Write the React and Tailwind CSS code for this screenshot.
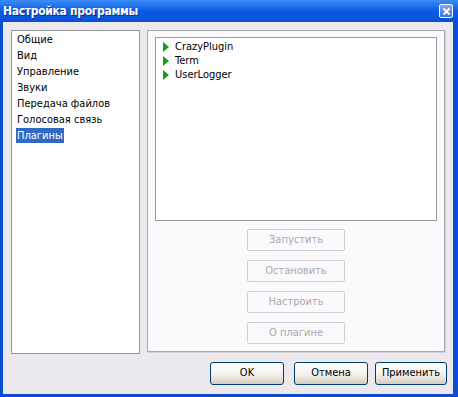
import React from "react";

const SECTIONS = ["Общие", "Вид", "Управление", "Звуки", "Передача файлов", "Голосовая связь", "Плагины"];
const PLUGINS = ["CrazyPlugin", "Term", "UserLogger"];
const PLUGIN_ACTIONS = ["Запустить", "Остановить", "Настроить", "О плагине"];

const font = { fontFamily: '"DejaVu Sans Condensed", "DejaVu Sans", Tahoma, sans-serif' };

function XpButton({ children, className }) {
  return (
    <button
      className={`${className} h-[23px] rounded-[3px] border border-[#003c74] bg-gradient-to-b from-[#ffffff] via-[#f3f3ef] to-[#d6d0c5] text-[11px] text-black shadow-[inset_0_-2px_0_#d8d2bd]`}
    >
      {children}
    </button>
  );
}

export default function App() {
  return (
    <div className="w-[458px] h-[397px] flex flex-col bg-[#0a4ed6]" style={font}>
      {/* Title bar */}
      <div className="h-[22px] flex items-center justify-between pl-[3px] pr-[5px] bg-gradient-to-b from-[#3b8cf7] via-[#0a5ce4] to-[#0850d6]">
        <span className="text-white text-[12px] font-bold tracking-tight [text-shadow:1px_1px_0_#0a2f8f]">Настройка программы</span>
        <div className="w-[14px] h-[14px] rounded-[2px] border border-white bg-gradient-to-b from-[#7fa9f4] to-[#3a72e0] flex items-center justify-center">
          <svg width="9" height="9" viewBox="0 0 9 9">
            <path d="M1.5 1.5 L7.5 7.5 M7.5 1.5 L1.5 7.5" stroke="white" strokeWidth="2" />
          </svg>
        </div>
      </div>

      {/* Body */}
      <div className="flex-1 ml-[3px] mr-[5px] mb-[3px] bg-[#ebe9ed] flex flex-col pt-[8px] pl-[8px] pr-[6px]">
        <div className="flex gap-[7px] items-start">
          {/* Section list */}
          <div className="w-[129px] h-[324px] bg-white border border-[#9a9a9a] pl-[4px] flex flex-col">
            {SECTIONS.map((s) => (
              <div key={s} className="h-[16px] flex items-center text-[11px] text-black">
                <span className={`px-[1px] h-[15px] leading-[15px] ${s === "Плагины" ? "bg-[#316ac5] text-white" : ""}`}>{s}</span>
              </div>
            ))}
          </div>

          {/* Plugins panel */}
          <div className="w-[298px] h-[322px] bg-[#fafafc] border border-[#a8a8b0] shadow-[1px_1px_0_#d4d2d8] flex flex-col items-center pt-[6px]">
            <div className="w-[282px] h-[184px] bg-white border border-[#9a9a9a] pt-[2px] pl-[7px]">
              {PLUGINS.map((p) => (
                <div key={p} className="h-[14px] flex items-center gap-[6px] text-[11px] text-black">
                  <svg width="6" height="10" viewBox="0 0 6 10">
                    <path d="M0 0 L6 5 L0 10 Z" fill="#1a9a1a" />
                  </svg>
                  <span>{p}</span>
                </div>
              ))}
            </div>
            <div className="flex flex-col gap-[9px] mt-[8px]">
              {PLUGIN_ACTIONS.map((a) => (
                <button
                  key={a}
                  disabled
                  className="w-[98px] h-[22px] rounded-[2px] border border-[#cfcfd4] bg-[#fafafc] text-[11px] text-[#a9a9ad]"
                >
                  {a}
                </button>
              ))}
            </div>
          </div>
        </div>

        {/* Dialog buttons */}
        <div className="flex justify-end mt-[8px]">
          <XpButton className="w-[74px]">OK</XpButton>
          <XpButton className="w-[74px] ml-[10px]">Отмена</XpButton>
          <XpButton className="w-[72px] ml-[7px]">Применить</XpButton>
        </div>
      </div>
    </div>
  );
}
